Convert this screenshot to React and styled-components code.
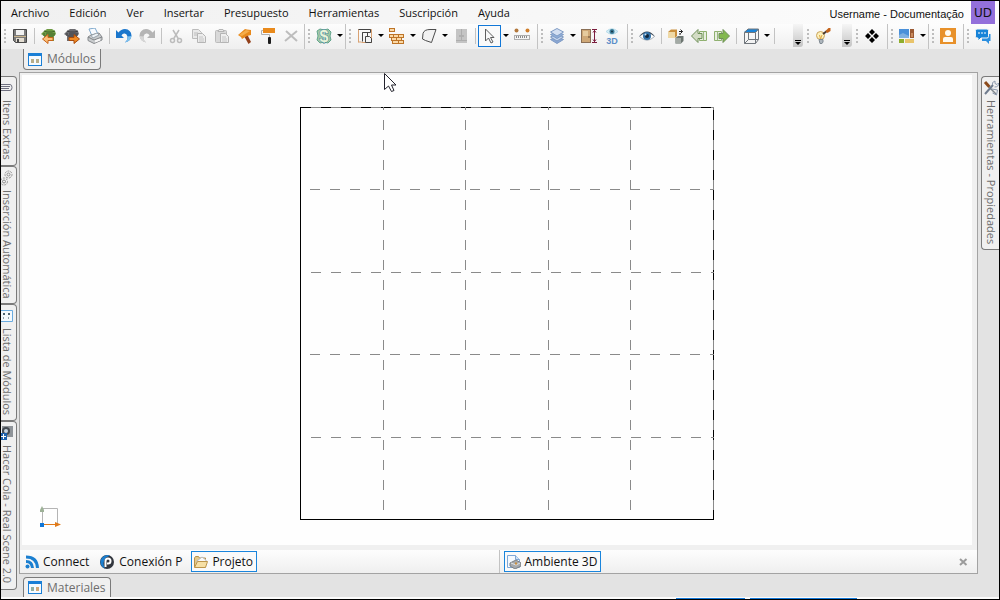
import React from "react";
import styled, { createGlobalStyle } from "styled-components";

const GlobalStyle = createGlobalStyle`
  * {
    box-sizing: border-box;
  }

  body {
    margin: 0;
    background-color: #e3e3e3;
    font-family: "Open Sans", "Noto Sans", sans-serif;
    font-size: 12px;
    color: #111111;
  }

  button {
    padding: 0;
    border: none;
    background: none;
    font: inherit;
    color: inherit;
    cursor: pointer;
  }

  svg {
    display: block;
    flex: none;
  }
`;

const Window = styled.div`
  display: flex;
  flex-direction: column;
  min-height: 100vh;
  border: 1px solid #000000;
  background-color: #e3e3e3;
`;

const MenuBar = styled.header`
  display: flex;
  justify-content: space-between;
  height: 23px;
  padding-right: 4px;
  background: linear-gradient(90deg, #f0f0f0, #fdfdfd);
`;

const Menu = styled.nav`
  display: flex;
  align-items: center;
`;

const MenuButton = styled.button`
  height: 23px;
  padding: 0 10px;
  font-size: 11px;
  line-height: 22px;
`;

const Account = styled.div`
  display: flex;
  align-items: center;
  gap: 7px;
  font-family: "Liberation Sans", Arial, sans-serif;
  font-size: 11px;
`;

const UserName = styled.span`
  padding-top: 3px;
`;

const Avatar = styled.button`
  width: 24px;
  height: 23px;
  background-color: #9370db;
  font-family: "DejaVu Sans", sans-serif;
  font-size: 12px;
  line-height: 22px;
`;

const ToolBar = styled.div`
  display: flex;
  height: 25px;
  background: linear-gradient(180deg, #fdfdfd, #efefef);
`;

const ToolGroup = styled.div`
  display: flex;
  align-items: center;
  padding: 0 ${({ $end }) => $end || 1}px 2px 0;
  border-right: ${({ $plain }) => ($plain ? "none" : "1px solid #c3c3c3")};
`;

const Grip = styled.span`
  width: 7px;
  height: 14px;
  border-left: 3px solid transparent;
  background: repeating-linear-gradient(
      180deg,
      #bdbdbd 0 2px,
      transparent 2px 4px
    )
    0 0 / 2px 14px no-repeat;
`;

const ToolButton = styled.button`
  display: flex;
  align-items: center;
  justify-content: center;
  width: 23px;
  height: 22px;
  border: 1px solid ${({ $active }) => ($active ? "#1177d7" : "transparent")};
  background-color: ${({ $active }) => ($active ? "#fafafa" : "transparent")};
`;

const DropButton = styled.button`
  display: flex;
  align-items: center;
  justify-content: center;
  width: 9px;
  height: 22px;

  &::before {
    content: "";
    border: 3px solid transparent;
    border-top-color: #000000;
    border-bottom: none;
  }
`;

const Separator = styled.span`
  width: 6px;
  height: 16px;
  border-left: 3px solid transparent;
  background: linear-gradient(#c3c3c3, #c3c3c3) 0 0 / 1px 16px no-repeat;
`;

const Overflow = styled.button`
  display: flex;
  flex-direction: column;
  align-items: center;
  justify-content: flex-end;
  gap: 1px;
  width: 10px;
  height: 23px;
  margin-left: ${({ $before }) => $before}px;
  padding-bottom: 2px;
  border-radius: 0 0 3px 0;
  background: linear-gradient(180deg, #f6f6f6, #c4c4c4);

  &::before {
    content: "";
    width: 6px;
    height: 1px;
    background-color: #000000;
  }

  &::after {
    content: "";
    border: 3px solid transparent;
    border-top-color: #000000;
    border-bottom: none;
  }
`;

const Workspace = styled.div`
  display: flex;
  flex: 1;
`;

const LeftRail = styled.aside`
  display: flex;
  flex-direction: column;
  width: 16px;
  padding-top: 27px;
`;

const RightRail = styled.aside`
  width: 21px;
  padding: 27px 0 0 3px;
`;

const SideTab = styled.button`
  display: flex;
  align-items: center;
  justify-content: flex-start;
  gap: 4px;
  width: ${({ $right }) => ($right ? 18 : 16)}px;
  padding: ${({ $right }) => ($right ? "3px 0 5px" : "3px 3px 5px 0")};
  border: 1px solid #7a7a7a;
  border-left-width: ${({ $right }) => ($right ? 1 : 0)}px;
  border-right-width: ${({ $right }) => ($right ? 0 : 1)}px;
  border-radius: ${({ $right }) => ($right ? "4px 0 0 4px" : "0 4px 4px 0")};
  background-color: #f0f0f0;
  color: #6d6d6d;
  font-size: 11px;
  line-height: 12px;
  writing-mode: vertical-rl;
  white-space: nowrap;
`;

const Center = styled.main`
  display: flex;
  flex: 1;
  flex-direction: column;
  padding-left: 2px;
`;

const TabStrip = styled.div`
  display: flex;
  padding: ${({ $bottom }) => ($bottom ? "3px 4px 0" : "0 4px 2px")};
`;

const DockTab = styled.button`
  display: flex;
  align-items: center;
  gap: 5px;
  height: ${({ $bottom }) => ($bottom ? 20 : 21)}px;
  padding: 0 4px;
  border: 1px solid #7a7a7a;
  border-top-width: ${({ $bottom }) => ($bottom ? 1 : 0)}px;
  border-bottom-width: ${({ $bottom }) => ($bottom ? 0 : 1)}px;
  border-radius: ${({ $bottom }) => ($bottom ? "4px 4px 0 0" : "0 0 4px 4px")};
  background-color: #f0f0f0;
  color: #6d6d6d;
  line-height: 16px;
`;

const DocumentPanel = styled.section`
  display: flex;
  flex: 1;
  flex-direction: column;
  border: 1px solid #a3a3a3;
  background-color: #f0f0f0;
`;

const Canvas = styled.div`
  position: relative;
  flex: 1;
  margin: 2px 5px 5px 2px;
  background-color: #fefefe;
`;

const Pointer = styled.svg`
  position: absolute;
  top: -2px;
  left: 362px;
`;

const DocumentBar = styled.footer`
  display: grid;
  grid-template-columns: 1fr 1fr;
  height: 23px;
  background: linear-gradient(180deg, #fdfdfd, #efefef);
`;

const DocumentGroup = styled.div`
  display: flex;
  align-items: center;
  gap: 6px;
  padding: 0 4px;

  & + & {
    border-left: 1px solid #c3c3c3;
  }
`;

const DocumentButton = styled.button`
  display: flex;
  align-items: center;
  gap: 4px;
  height: 21px;
  padding: 0 ${({ $active }) => ($active ? "3px 0 2px" : "2px 0 0")};
  border: 1px solid ${({ $active }) => ($active ? "#1a85dc" : "transparent")};
  background-color: ${({ $active }) => ($active ? "#fafafa" : "transparent")};
`;

const CloseButton = styled.button`
  margin-left: auto;
  padding: 4px 5px;
`;

const ProgressLine = styled.div`
  display: flex;
  align-items: flex-end;
  gap: 5px;
  height: 2px;
  padding-left: 67.6%;
  background-color: #fbfbfb;
`;

const Progress = styled.span`
  width: ${({ $width }) => $width}%;
  height: 1px;
  background-color: #1177d7;
`;

function Icon({ size = 16, width, height, children }) {
  return (
    <svg
      width={width || size}
      height={height || size}
      viewBox={`0 0 ${width || size} ${height || size}`}
      aria-hidden="true"
    >
      {children}
    </svg>
  );
}

const SaveIcon = () => (
  <Icon>
    <path d="M1.500 1.500h13v13h-11l-2-2z" fill="#7b7b7b" stroke="#4a4a4a" />
    <path d="M4 2h8v5H4z" fill="#f1f1f1" />
    <path d="M2 8h12v1H2z" fill="#c9b48c" />
    <path d="M4 10h8v4H4z" fill="#e4ded2" />
    <path d="M5 11h2v3H5z" fill="#4a4a4a" />
  </Icon>
);

const BoxIcon = ({ color, dark, out }) => (
  <Icon>
    <path d="M3 3l3-2h5l3 2 1 3-2 2v5H3V8L0 6z" fill={color} />
    <path d="M3 3l3 1h5l3-1M3 8V5M13 8V5" fill="none" stroke={dark} />
    <path d="M5 6h7M4 8h8" stroke={dark} />
    {out ? (
      <path d="M5 9.500h5v-3l5.500 4.500-5.500 4.500v-3H5z" fill="#f08a24" stroke="#a84b0c" />
    ) : (
      <path d="M12 9.500H7v-3L1.500 11 7 15.500v-3h5z" fill="#fbc07a" stroke="#c9641a" />
    )}
  </Icon>
);

const PrintIcon = () => (
  <Icon>
    <path d="M2 1l6-1 3 6-6 2z" fill="#f8fbff" stroke="#7fa9cc" />
    <path d="M1 9l3-2 8-2 3 4v3l-8 3.500-6-3z" fill="#c9ccce" stroke="#86898c" />
    <path d="M1 9l6 3 8-3" fill="none" stroke="#808488" />
    <path d="M4 7.500l6-2.500 2 2-6 3z" fill="#eef3f7" stroke="#9aa4ad" />
    <path d="M8 13.500l5-2" stroke="#f7f7f7" strokeWidth="2" />
  </Icon>
);

const TurnIcon = ({ color, light, flip }) => (
  <Icon>
    <g transform={flip ? "translate(16 0) scale(-1 1)" : undefined}>
      <path d="M0 2l2.500 2.500Q5 1 9 1q6 .5 6.500 6.500Q15 13 9 14.500q3-3 2.500-6Q10.500 5 8 5.500 6 6 5.500 7.500L8 10H0z" fill={color} />
      <path d="M9 14.500q3-3 2.500-6l4-.5Q15 13 9 14.500z" fill={light} />
    </g>
  </Icon>
);

const CutIcon = () => (
  <Icon>
    <path d="M5 2l5.500 9M11 2L5.500 11" stroke="#bcbcbc" strokeWidth="1.500" />
    <circle cx="4.500" cy="12.500" r="2" fill="none" stroke="#bcbcbc" strokeWidth="1.500" />
    <circle cx="11.500" cy="12.500" r="2" fill="none" stroke="#bcbcbc" strokeWidth="1.500" />
  </Icon>
);

const CopyIcon = () => (
  <Icon>
    <path d="M1.500 1.500h6l3 3v6h-9z" fill="#e9e9e9" stroke="#bcbcbc" />
    <path d="M3 5h4M3 7h4" stroke="#bcbcbc" />
    <path d="M6.500 5.500h5l3 3v6h-8z" fill="#ededed" stroke="#b5b5b5" />
    <path d="M8 9h4M8 11h5M8 13h5" stroke="#c6c6c6" />
  </Icon>
);

const PasteIcon = () => (
  <Icon>
    <rect x="1.500" y="2.500" width="11" height="12" rx="1" fill="#d9d9d9" stroke="#bcbcbc" />
    <path d="M4 3.500l1-2h4l1 2z" fill="#e9e9e9" stroke="#b5b5b5" />
    <path d="M6.500 5.500h5l3 3v6h-8z" fill="#efefef" stroke="#b5b5b5" />
    <path d="M8 9h4M8 11h5M8 13h5" stroke="#c6c6c6" />
  </Icon>
);

const HammerIcon = () => (
  <Icon>
    <path d="M7 8l3-2 4 8-2.500 2z" fill="#92401a" />
    <path d="M1 7l7-6 2 .5 4 .5v5l-4 1-5 3-1-2z" fill="#e8891c" />
    <path d="M2 7l7-5 4 1-8 5z" fill="#f5ad4a" />
  </Icon>
);

const RollerIcon = () => (
  <Icon>
    <rect x="3" y="0" width="12" height="5" fill="#e98a1c" />
    <path d="M3 2.500H1.500v4h8V10" fill="none" stroke="#b0b0b0" />
    <rect x="8" y="9" width="3" height="7" rx="1" fill="#1c1c1c" />
  </Icon>
);

const DeleteIcon = () => (
  <Icon>
    <path d="M3 3l11 10M14 3L2 13" stroke="#bdbdbd" strokeWidth="2" />
  </Icon>
);

const MoneyIcon = () => (
  <Icon>
    <path d="M1 3l3-2 4 1 4-1 3 3-1 4 1 4-3 3-4-1-4 1-3-3 1-4z" fill="#a3c9a6" stroke="#63a58e" />
    <text
      x="8"
      y="14"
      textAnchor="middle"
      fontFamily="Liberation Sans, sans-serif"
      fontSize="16"
      fontWeight="700"
      fill="#e8f3d8"
      stroke="#3f7f9c"
      strokeWidth="1"
      paintOrder="stroke"
    >
      $
    </text>
  </Icon>
);

const WallIcon = () => (
  <Icon>
    <path d="M1.500 14.500v-13h13v13h-10" fill="none" stroke="#d9a273" />
    <path d="M1.500 1.500h12v3h-8v9" fill="none" stroke="#454545" />
    <path d="M1.500 2v12h3" fill="none" stroke="#d9a273" />
    <path d="M5.500 4.500h5v4M8.500 14V8.500h4l2 2v4h-6z" fill="none" stroke="#454545" />
  </Icon>
);

const BricksIcon = () => (
  <Icon>
    <g fill="#fbd9a6" stroke="#bd7427">
      <rect x=".5" y=".5" width="5" height="3" />
      <rect x=".5" y="6.500" width="4" height="3" />
      <rect x="4.500" y="6.500" width="5" height="3" />
      <rect x="9.500" y="6.500" width="5" height="3" />
      <rect x="2.500" y="9.500" width="5" height="3" />
      <rect x="7.500" y="9.500" width="5" height="3" />
      <rect x="3.500" y="12.500" width="6" height="3" />
      <rect x="9.500" y="12.500" width="5" height="3" />
    </g>
  </Icon>
);

const ShapeIcon = () => (
  <Icon>
    <path d="M2 5.500Q3 1.500 9 1.500h6L10.500 14.500l-6-2-3-1.500z" fill="#f2f2f2" stroke="#4d4d4d" />
  </Icon>
);

const CabinetIcon = () => (
  <Icon>
    <rect x="3" y="1" width="11" height="14" fill="#c4c4c4" />
    <path d="M8.500 1v11M3 12.500h11" stroke="#adadad" />
    <path d="M7 7v2M10 7v2" stroke="#9b9b9b" />
  </Icon>
);

const ArrowIcon = () => (
  <Icon>
    <path d="M3.500 1v12l3-3 2.500 5 2-1-2.500-4.500H12z" fill="#f8f8f8" stroke="#5e5e5e" />
  </Icon>
);

const RulerIcon = () => (
  <Icon>
    <circle cx="2.500" cy="2.500" r="2" fill="#b3783c" />
    <circle cx="13.500" cy="2.500" r="2" fill="#d07e2b" />
    <rect x=".5" y="7.500" width="15" height="4" fill="#f4f4f4" stroke="#adadad" />
    <path d="M2.500 8v2M4.500 8v2M6.500 8v2M8.500 8v2M10.500 8v2M12.500 8v2" stroke="#8a8a8a" />
  </Icon>
);

const LayersIcon = () => (
  <Icon>
    <g stroke="#7f9bc4">
      <path d="M1.500 11.500l6.500-3 6.500 3L8 15.500z" fill="#8ba7d4" />
      <path d="M1.500 9l6.500-3 6.500 3L8 13z" fill="#c3d3ec" />
      <path d="M1.500 6.500l6.500-3 6.500 3L8 10.500z" fill="#8fadd8" />
      <path d="M1.500 4L8 .5 14.500 4 8 8z" fill="#d3dff2" />
    </g>
  </Icon>
);

const DoorHeightIcon = () => (
  <Icon>
    <rect x=".5" y="1.500" width="9" height="13" fill="#cfa877" stroke="#8a6f55" />
    <rect x="2" y="3" width="5" height="5" fill="#e6cb9e" />
    <path d="M8 8v2" stroke="#5d4731" />
    <path d="M11 1.500h5M11 14.500h5M13.500 2v12" stroke="#7b1c3e" />
    <path d="M12 4.500l1.500-2 1.500 2M12 11.500l1.500 2 1.500-2" fill="none" stroke="#7b1c3e" />
  </Icon>
);

const ThreeDIcon = () => (
  <Icon>
    <path d="M2 3.500Q8-2 14 3.500 8 9 2 3.500z" fill="#d4ecf5" stroke="#b8dcea" />
    <circle cx="8" cy="3.500" r="2.500" fill="#3f7f9c" />
    <circle cx="8" cy="3.500" r="1" fill="#16323f" />
    <text
      x="8"
      y="15.500"
      textAnchor="middle"
      fontFamily="Liberation Sans, sans-serif"
      fontSize="9"
      fontWeight="700"
      fill="#5b8fc9"
    >
      3D
    </text>
  </Icon>
);

const EyeIcon = () => (
  <Icon>
    <path d="M.5 8.500Q8 0 15.500 8.500 8 16 .5 8.500z" fill="#ffffff" stroke="#a9b1b9" />
    <path d="M0 8.500Q8-1.500 16 8.500 8 2 0 8.500z" fill="#3d4956" />
    <circle cx="8" cy="8" r="4" fill="#3372a8" />
    <circle cx="8" cy="8" r="2" fill="#10263b" />
    <circle cx="6.500" cy="6.500" r="1" fill="#c7def0" />
  </Icon>
);

const BlocksIcon = () => (
  <Icon>
    <path d="M0 4l3-2.500h6V8L7 10H0z" fill="#c98f3d" />
    <path d="M0 4h7v6H0z" fill="#efd9a6" />
    <path d="M7.500 10l2.500-2h5.500v5L13 15.500H7.500z" fill="#6c7570" />
    <path d="M7.500 10H13v5.500H7.500z" fill="#a3aaa5" />
    <path d="M11 3.500h3.500M12.500 1.500l2 2-2 2M12 5v2" fill="none" stroke="#222222" />
  </Icon>
);

const WayIcon = ({ color, flip }) => (
  <Icon>
    <g transform={flip ? "translate(16 0) scale(-1 1)" : undefined}>
      <path d="M8.500 3.500h7v9h-7z" fill="#e8eee0" stroke="#8fb06f" />
      <path d="M12.500 3.500v9" stroke="#9ab981" />
      <path d="M.5 8l6.500-6.500v4h4v5H7v4z" fill={color} stroke="#6e8f59" />
    </g>
  </Icon>
);

const CubeIcon = () => (
  <Icon>
    <path d="M1 4l4-3h11l-3 3z" fill="#1b84d8" />
    <path
      d="M1.500 4.500h11v11h-11zM1.500 4.500L5 1h10.500v10.500l-3 4M12.500 4.500L15.500 1M5.500 4v7.500h10M5.500 11.500l-4 4"
      fill="none"
      stroke="#70767c"
    />
  </Icon>
);

const BulbIcon = () => (
  <Icon>
    <circle cx="5.500" cy="7.500" r="4" fill="#fdf1bd" stroke="#c9a35b" />
    <path d="M4.500 7l1 4 1.500-4" fill="none" stroke="#e0a944" />
    <path d="M4 11.500h4V14l-1 1.500H5z" fill="#aeb6bd" stroke="#808a92" />
    <path d="M8 6l4-3" stroke="#4a3b33" strokeWidth="2" />
    <path d="M10.500 3l3-3 2 0v3l-3 2z" fill="#c4631b" />
  </Icon>
);

const DiamondsIcon = () => (
  <Icon>
    <path
      d="M8 1l3 3-3 3-3-3zM4 5l3 3-3 3-3-3zM12 5l3 3-3 3-3-3zM8 9l3 3-3 3-3-3z"
      fill="#000000"
    />
  </Icon>
);

const GalleryIcon = () => (
  <Icon>
    <rect x="0" y="1" width="10" height="9" fill="#4a90d9" />
    <path d="M0 7l4-2 6 3v2H0z" fill="#7fb0e0" />
    <rect x="11" y="1" width="4" height="9" fill="#9b5a34" />
    <path d="M12 5h2v4h-2z" fill="#c98b5e" />
    <rect x="0" y="11" width="5" height="4" fill="#8fae2c" />
    <rect x="6" y="11" width="9" height="4" fill="#e9c46b" />
  </Icon>
);

const ContactIcon = () => (
  <Icon>
    <rect width="16" height="16" fill="#e8912a" />
    <circle cx="8" cy="5" r="3" fill="#fffaf0" />
    <path d="M3 14V11q0-2 2-2h6q2 0 2 2v3z" fill="#fffaf0" />
  </Icon>
);

const ChatIcon = () => (
  <Icon>
    <path d="M7 6h8.500v7H14v3l-3-3H7z" fill="#2b8fe0" />
    <path
      d="M2 1h10q1.500 0 1.500 1.500v6Q13.500 10 12 10H6l-3 3v-3H2Q.5 10 .5 8.500v-6Q.5 1 2 1z"
      fill="#1783d8"
      stroke="#f5f5f5"
    />
    <path d="M3 5h2M6 5h2M9 5h2" stroke="#ffffff" strokeWidth="1" />
  </Icon>
);

const ModulesIcon = ({ left = "#b7ad8a", right = "#b7ad8a" }) => (
  <Icon width={14} height={13}>
    <rect x=".5" y=".5" width="13" height="12" fill="#f6fafe" stroke="#1a7fd6" />
    <path d="M1 2h12" stroke="#1a7fd6" strokeWidth="2" />
    <rect x="3" y="6" width="3" height="4" fill={left} />
    <rect x="8" y="6" width="3" height="4" fill={right} />
  </Icon>
);

const ClipIcon = () => (
  <Icon width={12} height={16}>
    <path d="M0 4.500h9q2 0 2 3t-2 3H0M0 8.500h8M0 6.500h9" fill="none" stroke="#6f7080" />
  </Icon>
);

const GearsIcon = () => (
  <Icon width={12} height={16}>
    <g fill="none" stroke="#8d8d8d">
      <circle cx="7.500" cy="4.500" r="3.500" strokeDasharray="2 1" />
      <circle cx="7.500" cy="4.500" r="1.500" />
      <circle cx="3" cy="11.500" r="3.500" strokeDasharray="2 1" />
      <circle cx="3" cy="11.500" r="1.500" />
    </g>
  </Icon>
);

const ListIcon = () => (
  <Icon width={12} height={16}>
    <path d="M0 2.500h11.500v11H0" fill="#f4f9fd" stroke="#6aabdf" />
    <path d="M2 5h2v2H2zM7 5h2v2H7z" fill="#4c6370" />
    <path d="M2.500 9v2M7.500 9v2" stroke="#93a2ad" />
  </Icon>
);

const CameraIcon = () => (
  <Icon width={12} height={16}>
    <path d="M1 1h11v11H1z" fill="#8f9499" />
    <circle cx="5" cy="6" r="4" fill="#454b52" />
    <circle cx="5" cy="6" r="2" fill="#c9d6e2" />
    <rect x="0" y="8" width="6" height="7" fill="#1d62ad" />
    <path d="M0 11.500h5M2.500 9v5" stroke="#ffffff" />
  </Icon>
);

const ToolsIcon = () => (
  <Icon>
    <path d="M2 2l4.500 5" stroke="#8b4a1b" strokeWidth="3" />
    <path d="M6 7l7 7" stroke="#7f868d" strokeWidth="1.500" />
    <path d="M2 14l8-9" stroke="#6f7b8d" strokeWidth="2" />
    <path
      d="M9.500 5q-1-3 2.500-4v2.500l2 1L15.500 3q.5 4-4 4M9 9l5.500 1-1 5-4-2"
      fill="none"
      stroke="#8d9aaf"
    />
  </Icon>
);

const ConnectIcon = () => (
  <Icon width={14} height={14}>
    <circle cx="2.500" cy="11.500" r="2" fill="#1b7fd0" />
    <path
      d="M1 6.500q6 0 6.500 6.500M1 2q11 0 11.500 11"
      fill="none"
      stroke="#1b7fd0"
      strokeWidth="3"
    />
  </Icon>
);

const PromobIcon = () => (
  <Icon>
    <circle cx="8" cy="8" r="7" fill="#33373f" />
    <path d="M11 1.500A7 7 0 1 0 6 14.700Q2.500 8 7 3.500z" fill="#1b7fd0" />
    <path
      d="M6.500 13V7q0-2.500 2.500-2.500T11.500 7 9 9.500H8"
      fill="none"
      stroke="#ffffff"
      strokeWidth="2"
    />
  </Icon>
);

const FolderIcon = () => (
  <Icon width={14} height={14}>
    <path d="M.5 12V3l1-1.500h3l1 1.500h6v9z" fill="#e3c98b" stroke="#b9924a" />
    <path d="M3 6l5-4 4 3v3H3z" fill="#fafafa" stroke="#b8b8b8" />
    <path d="M.5 12.500l3-6h10l-2 6z" fill="#f6e0a6" stroke="#bd964c" />
  </Icon>
);

const SceneIcon = () => (
  <Icon width={14} height={14}>
    <path d="M.5.500h8l4 4v8H.5z" fill="#f4f9ff" stroke="#7fa7d6" />
    <path d="M8.500.500v4h4" fill="#cfe1f5" stroke="#7fa7d6" />
    <path d="M3 8l6-3 5 3v3l-6 3-5-3z" fill="#a6a9ad" stroke="#7b8085" />
    <path d="M4 8l5 2 4-2" fill="none" stroke="#e2e4e6" />
    <path d="M8 8.500h2" stroke="#c98d3c" strokeWidth="2" />
  </Icon>
);

const CloseIcon = () => (
  <Icon width={9} height={8}>
    <path d="M1 1l6.500 6M7.500 1L1 7" stroke="#9c9c9c" strokeWidth="2" />
  </Icon>
);

const menus = [
  "Archivo",
  "Edición",
  "Ver",
  "Insertar",
  "Presupuesto",
  "Herramientas",
  "Suscripción",
  "Ayuda",
];

const SEPARATOR = "separator";

const toolGroups = [
  {
    end: 2,
    tools: [
      { label: "Guardar", icon: <SaveIcon /> },
      SEPARATOR,
      { label: "Importar", icon: <BoxIcon color="#6f9b45" dark="#3f6427" /> },
      { label: "Exportar", icon: <BoxIcon color="#6c6c70" dark="#3d3d40" out /> },
      { label: "Imprimir", icon: <PrintIcon /> },
      SEPARATOR,
      { label: "Deshacer", icon: <TurnIcon color="#1a76cc" light="#7cc0ee" /> },
      { label: "Rehacer", icon: <TurnIcon color="#b5b5b5" light="#d6d6d6" flip /> },
      SEPARATOR,
      { label: "Cortar", icon: <CutIcon /> },
      { label: "Copiar", icon: <CopyIcon /> },
      { label: "Pegar", icon: <PasteIcon /> },
      { label: "Martillo", icon: <HammerIcon /> },
      { label: "Pintar", icon: <RollerIcon /> },
      { label: "Eliminar", icon: <DeleteIcon /> },
    ],
  },
  { tools: [{ label: "Precio", icon: <MoneyIcon />, drop: true }] },
  {
    end: 4,
    tools: [
      { label: "Pared", icon: <WallIcon />, drop: true },
      { label: "Ladrillos", icon: <BricksIcon />, drop: true },
      { label: "Forma", icon: <ShapeIcon />, drop: true },
      { label: "Armario", icon: <CabinetIcon /> },
      SEPARATOR,
      { label: "Seleccionar", icon: <ArrowIcon />, drop: true, active: true },
      { label: "Medir", icon: <RulerIcon /> },
    ],
  },
  {
    end: 4,
    tools: [
      { label: "Capas", icon: <LayersIcon />, drop: true },
      { label: "Altura", icon: <DoorHeightIcon /> },
      { label: "Ver 3D", icon: <ThreeDIcon /> },
    ],
  },
  {
    overflow: 16,
    tools: [
      { label: "Visualizar", icon: <EyeIcon /> },
      SEPARATOR,
      { label: "Bloques", icon: <BlocksIcon /> },
      { label: "Anterior", icon: <WayIcon color="#d3dcc4" /> },
      { label: "Siguiente", icon: <WayIcon color="#82b84e" flip /> },
      SEPARATOR,
      { label: "Perspectiva", icon: <CubeIcon />, drop: true },
      SEPARATOR,
    ],
  },
  { overflow: 8, tools: [{ label: "Iluminación", icon: <BulbIcon /> }] },
  { end: 4, tools: [{ label: "Mover", icon: <DiamondsIcon /> }] },
  { tools: [{ label: "Galería", icon: <GalleryIcon />, drop: true }] },
  { end: 4, tools: [{ label: "Contacto", icon: <ContactIcon /> }] },
  { plain: true, tools: [{ label: "Chat", icon: <ChatIcon /> }] },
];

const leftTabs = [
  { label: "Itens Extras", icon: <ClipIcon /> },
  { label: "Inserción Automática", icon: <GearsIcon /> },
  { label: "Lista de Módulos", icon: <ListIcon /> },
  { label: "Hacer Cola - Real Scene 2.0", icon: <CameraIcon /> },
];

// Room of five by five modules, one cell every 82.5 units
const verticals = [361.5, 443.5, 526.5, 608.5, 691.5];
const horizontals = [
  { y: 32.5, gap: 11 },
  { y: 114.5, gap: 10 },
  { y: 197.5, gap: 11 },
  { y: 279.5, gap: 10 },
  { y: 362.5, gap: 11 },
];

function ToolItem({ tool }) {
  if (tool === SEPARATOR) {
    return <Separator />;
  }

  return (
    <>
      <ToolButton $active={tool.active} aria-label={tool.label}>
        {tool.icon}
      </ToolButton>
      {tool.drop && <DropButton aria-label={`${tool.label}: opciones`} />}
    </>
  );
}

function FloorPlan() {
  return (
    <svg width="100%" height="470" viewBox="0 0 950 470" aria-hidden="true">
      <rect x="278.5" y="32.5" width="413" height="412" fill="none" stroke="#000000" />
      <g stroke="#8a8a8a" strokeDasharray="10 10">
        {verticals.map((x) => (
          <path key={x} d={`M${x} 32V444`} strokeDashoffset="7" />
        ))}
        {horizontals.map(({ y, gap }) => (
          <path key={y} d={`M${278 + gap} ${y}H692`} />
        ))}
      </g>
      <path d="M20.500 449.500v-16h15v16" fill="none" stroke="#b4b4b4" />
      <path d="M18 435l2-4 2 4v2h-4z" fill="#9db197" />
      <path d="M20 449.500h15" stroke="#e07a1a" />
      <path d="M33 447l6 2.500-6 2.500z" fill="#e07a1a" />
      <rect x="18" y="448" width="4" height="4" fill="#1177d7" />
    </svg>
  );
}

function App() {
  return (
    <Window>
      <GlobalStyle />
      <MenuBar>
        <Menu>
          {menus.map((label) => (
            <MenuButton key={label}>{label}</MenuButton>
          ))}
        </Menu>
        <Account>
          <UserName>Username - Documentação</UserName>
          <Avatar>UD</Avatar>
        </Account>
      </MenuBar>
      <ToolBar>
        {toolGroups.map(({ tools, end, overflow, plain }, index) => (
          <ToolGroup key={index} $end={end} $plain={plain || overflow}>
            <Grip />
            {tools.map((tool, toolIndex) => (
              <ToolItem key={toolIndex} tool={tool} />
            ))}
            {overflow && <Overflow $before={overflow} aria-label="Más botones" />}
          </ToolGroup>
        ))}
      </ToolBar>
      <Workspace>
        <LeftRail>
          {leftTabs.map(({ label, icon }) => (
            <SideTab key={label}>
              {icon}
              {label}
            </SideTab>
          ))}
        </LeftRail>
        <Center>
          <TabStrip>
            <DockTab>
              <ModulesIcon />
              Módulos
            </DockTab>
          </TabStrip>
          <DocumentPanel>
            <Canvas>
              <FloorPlan />
              <Pointer width="13" height="20" viewBox="0 0 13 20" aria-hidden="true">
                <path
                  d="M.5.500v16l4-3.500 3 5.500 2.500-1-2.500-5.500h4.500z"
                  fill="#ffffff"
                  stroke="#22222c"
                />
              </Pointer>
            </Canvas>
            <DocumentBar>
              <DocumentGroup>
                <DocumentButton>
                  <ConnectIcon />
                  Connect
                </DocumentButton>
                <DocumentButton>
                  <PromobIcon />
                  Conexión P
                </DocumentButton>
                <DocumentButton $active>
                  <FolderIcon />
                  Projeto
                </DocumentButton>
              </DocumentGroup>
              <DocumentGroup>
                <DocumentButton $active>
                  <SceneIcon />
                  Ambiente 3D
                </DocumentButton>
                <CloseButton aria-label="Cerrar">
                  <CloseIcon />
                </CloseButton>
              </DocumentGroup>
            </DocumentBar>
          </DocumentPanel>
          <TabStrip $bottom>
            <DockTab $bottom>
              <ModulesIcon left="#8fb0a4" right="#d3a877" />
              Materiales
            </DockTab>
          </TabStrip>
        </Center>
        <RightRail>
          <SideTab $right>
            <ToolsIcon />
            Herramientas - Propiedades
          </SideTab>
        </RightRail>
      </Workspace>
      <ProgressLine>
        <Progress $width={21.6} />
        <Progress $width={33} />
      </ProgressLine>
    </Window>
  );
}

export default App;
